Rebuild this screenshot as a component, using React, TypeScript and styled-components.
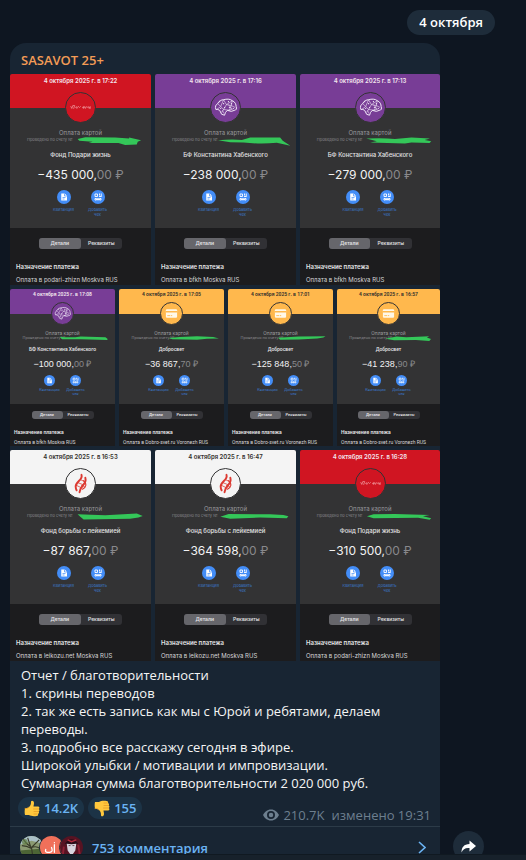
import React from "react";
import styled, { createGlobalStyle, css } from "styled-components";

const GlobalStyle = createGlobalStyle`
  * { box-sizing: border-box; }
  body {
    margin: 0;
    background: #0e1621;
    font-family: "Open Sans", "Noto Sans", sans-serif;
    font-size: 13px;
    color: #f5f5f5;
  }
  button { border: 0; padding: 0; margin: 0; background: none; font: inherit; color: inherit; cursor: pointer; }
  h1, h2, h3, p { margin: 0; font-size: inherit; font-weight: inherit; }
`;

/* ---------- sizes of the two kinds of receipt ---------- */

type Metrics = {
  font: string;
  amountFont: string;
  head: number; headPad: number; date: number; dateLine: number;
  logo: number; logoUp: number;
  text: number; line: number; kindGap: number;
  tiny: number; tinyLine: number;
  nameGap: number;
  amount: number; amountLine: number; amountGap: number;
  icon: number; iconGap: number; action: number; labelGap: number; labelLine: number; bodyPad: number;
  tabs: number; tabsWidth: number; tabsGap: number; tabText: number;
  side: number; titleGap: number; noteGap: number;
  inkTop: number; inkHeight: number;
};

const LARGE: Metrics = {
  font: "Inter",
  amountFont: "Inter",
  head: 34, headPad: 3, date: 6, dateLine: 8,
  logo: 31, logoUp: 16,
  text: 6, line: 8, kindGap: 6,
  tiny: 4, tinyLine: 6,
  nameGap: 8,
  amount: 12, amountLine: 14, amountGap: 9,
  icon: 14, iconGap: 8, action: 34, labelGap: 3, labelLine: 5, bodyPad: 11,
  tabs: 11, tabsWidth: 83, tabsGap: 10, tabText: 5,
  side: 6, titleGap: 14, noteGap: 5,
  inkTop: 28, inkHeight: 11,
};

const SMALL: Metrics = {
  font: "Roboto",
  amountFont: "Liberation Sans",
  head: 25, headPad: 2, date: 5, dateLine: 6,
  logo: 23, logoUp: 12,
  text: 5, line: 6, kindGap: 5,
  tiny: 4, tinyLine: 4,
  nameGap: 6,
  amount: 9, amountLine: 10, amountGap: 7,
  icon: 11, iconGap: 6, action: 26, labelGap: 2, labelLine: 4, bodyPad: 8,
  tabs: 8, tabsWidth: 62, tabsGap: 7, tabText: 4,
  side: 4, titleGap: 10, noteGap: 4,
  inkTop: 21, inkHeight: 8,
};

type M = { $m: Metrics };

/* ---------- page ---------- */

const Page = styled.div`
  height: 100vh;
  display: flex;
  flex-direction: column;
`;

const Chat = styled.main`
  flex: 1;
  min-height: 0;
  overflow: hidden;
  padding: 10px 31px 0 10px;
  display: flex;
  flex-direction: column;
`;

const DatePill = styled.time`
  align-self: flex-end;
  flex: none;
  padding: 0 12px;
  border-radius: 13px;
  background: #1e2c3a;
  font-weight: 600;
  line-height: 25px;
  color: #fff;
`;

const MessageRow = styled.div`
  flex: none;
  margin-top: 8px;
  display: flex;
  align-items: flex-end;
  gap: 13px;
  margin-right: 11px;
`;

const Bubble = styled.article`
  flex: 1;
  min-width: 0;
  border-radius: 16px 16px 0 0;
  background: #182533;
`;

const Author = styled.h2`
  padding: 8px 11px 5px;
  line-height: 18px;
  font-weight: 600;
  color: #f39c56;
`;

const ShareButton = styled.button`
  flex: none;
  width: 31px;
  height: 31px;
  margin-bottom: 6px;
  border-radius: 50%;
  background: #1e2c3a;
  color: #fff;
  display: grid;
  place-items: center;
`;

const Composer = styled.footer`
  flex: none;
  height: 6px;
  background: #17212b;
  border-top: 1px solid #101921;
`;

/* ---------- album ---------- */

const Album = styled.div`
  display: grid;
  gap: 4px;
`;

const AlbumRow = styled.div<{ $columns: string }>`
  display: grid;
  grid-template-columns: ${(p) => p.$columns};
  gap: 4px;
`;

const Card = styled.section<M>`
  min-width: 0;
  overflow: hidden;
  border-radius: 2px 2px 0 0;
  background: #1c1c1e;
  font-family: ${(p) => p.$m.font}, "Liberation Sans", sans-serif;
  color: #e4e4e6;
  white-space: nowrap;
`;

const Head = styled.header<M & { $tint: string; $dark: boolean }>`
  height: ${(p) => p.$m.head}px;
  padding-top: ${(p) => p.$m.headPad}px;
  background: ${(p) => p.$tint};
  color: ${(p) => (p.$dark ? "#33302c" : "#f3e6ee")};
  font-size: ${(p) => p.$m.date}px;
  line-height: ${(p) => p.$m.dateLine}px;
  font-weight: 600;
  text-align: center;
`;

const Body = styled.div<M>`
  position: relative;
  padding-bottom: ${(p) => p.$m.bodyPad}px;
  background: #333334;
  display: flex;
  flex-direction: column;
  align-items: center;
  font-size: ${(p) => p.$m.text}px;
  line-height: ${(p) => p.$m.line}px;
`;

const Logo = styled.div<M & { $tint: string }>`
  width: ${(p) => p.$m.logo}px;
  height: ${(p) => p.$m.logo}px;
  margin-top: -${(p) => p.$m.logoUp}px;
  border: 1px solid #333334;
  border-radius: 50%;
  background: ${(p) => p.$tint};
  svg { display: block; width: 100%; height: 100%; }
`;

const Kind = styled.p<M>`
  margin-top: ${(p) => p.$m.kindGap}px;
  color: #98989c;
`;

const Account = styled.p<M>`
  width: 100%;
  padding-left: 12%;
  font-size: ${(p) => p.$m.tiny}px;
  line-height: ${(p) => p.$m.tinyLine}px;
  color: #88888c;
`;

const Ink = styled.svg<M>`
  position: absolute;
  left: 44%;
  top: ${(p) => p.$m.inkTop}px;
  width: 53%;
  height: ${(p) => p.$m.inkHeight}px;
  fill: #34c759;
`;

const Payee = styled.h3<M>`
  margin-top: ${(p) => p.$m.nameGap}px;
  font-weight: 500;
`;

const Amount = styled.p<M>`
  margin-top: ${(p) => p.$m.amountGap}px;
  font-family: ${(p) => p.$m.amountFont}, Arial, sans-serif;
  font-size: ${(p) => p.$m.amount}px;
  line-height: ${(p) => p.$m.amountLine}px;
  color: #f2f2f3;
  span { color: #89898c; }
`;

const Actions = styled.div<M>`
  margin-top: ${(p) => p.$m.iconGap}px;
  display: flex;
  align-items: flex-start;
`;

const Action = styled.button<M>`
  width: ${(p) => p.$m.action}px;
  display: grid;
  justify-items: center;
  gap: ${(p) => p.$m.labelGap}px;
  font-size: ${(p) => p.$m.tiny}px;
  line-height: ${(p) => p.$m.labelLine}px;
  color: #3b78c9;
  svg { display: block; width: ${(p) => p.$m.icon}px; height: ${(p) => p.$m.icon}px; }
`;

const ActionLabel = styled.span<M>`
  min-height: ${(p) => p.$m.labelLine * 2}px;
`;

const Details = styled.div<M>`
  padding: ${(p) => p.$m.tabsGap}px ${(p) => p.$m.side}px 1px;
  font-size: ${(p) => p.$m.text}px;
  line-height: ${(p) => p.$m.line}px;
`;

const Tabs = styled.div<M>`
  width: ${(p) => p.$m.tabsWidth}px;
  height: ${(p) => p.$m.tabs}px;
  margin: 0 auto;
  border-radius: 3px;
  background: #313135;
  display: grid;
  grid-template-columns: 1fr 1fr;
  font-size: ${(p) => p.$m.tabText}px;
`;

const Tab = styled.button<{ $on?: boolean }>`
  border-radius: 3px;
  line-height: 1;
  font-weight: 500;
  ${(p) => p.$on && css`
    background: #66666b;
    font-weight: 600;
  `}
`;

const PurposeTitle = styled.h3<M>`
  margin-top: ${(p) => p.$m.titleGap}px;
  font-weight: 600;
`;

const Purpose = styled.p<M>`
  margin-top: ${(p) => p.$m.noteGap}px;
  color: #d6d6d8;
`;

/* ---------- caption and footer ---------- */

const Caption = styled.div`
  padding: 5px 11px 0;
  line-height: 18px;
`;

const MetaRow = styled.div`
  padding: 5px 9px 4px 8px;
  display: flex;
  align-items: flex-start;
  gap: 4px;
`;

const Reaction = styled.button`
  height: 22px;
  padding: 0 6px;
  border-radius: 11px;
  background: #1c3346;
  display: flex;
  align-items: center;
  gap: 4px;
  font-weight: 600;
  color: #6ab3f3;
`;

const Meta = styled.div`
  margin: 9px 0 -2px auto;
  display: flex;
  align-items: center;
  gap: 4px;
  line-height: 18px;
  color: #6d7f8f;
  time { margin-left: 3px; }
`;

const Comments = styled.button`
  width: 100%;
  padding: 8px 14px 8px 9px;
  border-top: 1px solid #2c3b48;
  display: flex;
  align-items: center;
  color: #6ab3f3;
  font-weight: 600;
  line-height: 14px;
`;

const Faces = styled.span`
  display: flex;
  margin-right: 10px;
`;

const Face = styled.svg`
  width: 25px;
  height: 25px;
  margin-right: -5px;
  border: 1px solid #182533;
  border-radius: 50%;
`;

const CommentCount = styled.span`
  flex: 1;
  margin-left: 3px;
  text-align: left;
`;

/* ---------- drawings ---------- */

const BrainLogo = () => (
  <svg viewBox="0 0 30 30" fill="none" stroke="#f4ecfa" strokeWidth="1" strokeLinejoin="round" aria-hidden="true">
    <path d="M5 17c-1-3 0-5 2-6 1-3 4-4 6-4 3-1 7-1 9 1 3 1 4 4 4 6 1 2 0 4-2 4l-3 1-4-1-2 2-1 3-3-1-2-4-2-1z" />
    <path d="M7 11l3 3-4 3m4-3 3-7 3 5 6-4-1 5 4 2m-9-3-3 5-3-3m3 3 6 1 2-5-5-1m-3 5-2 3m6-2 5-1-4-5m-6 6 1 3" strokeWidth=".6" />
    <path d="M9 9h.1M13 11h.1M18 9h.1M21 11h.1M10 16h.1M14 15h.1M19 15h.1M23 16h.1" strokeLinecap="round" strokeWidth="1.2" />
  </svg>
);

const ScriptLogo = () => (
  <svg viewBox="0 0 30 30" fill="none" stroke="#f2a3a8" strokeWidth=".7" strokeLinecap="round" aria-hidden="true">
    <path d="M5 14l1 2 1-3h2l-1 3M10 15q1-2 1 0t1 0 1-1l1 1 1-1M17 15l1-1v2l1-2 1 2 1-2 1 1 1-1 1 2 1-2v2" />
  </svg>
);

const FlameLogo = () => (
  <svg viewBox="0 0 30 30" fill="none" stroke="#dc3a32" strokeLinecap="round" aria-hidden="true">
    <path d="M16 6c2 5-6 7-6 12 0 2 0 2 1 4" strokeWidth="2" />
    <path d="M20 9c2 7-5 7-6 15" strokeWidth="2" />
    <path d="M18 12c4 3 3 7-1 9" strokeWidth="1.1" />
    <path d="M15 11l4 2M12 14l5 2M11 17l4 2M16 17l3 1" strokeWidth=".8" />
  </svg>
);

const CardLogo = () => (
  <svg viewBox="0 0 30 30" aria-hidden="true">
    <rect x="7" y="9" width="16" height="12" rx="1.5" fill="#fff8e8" />
    <path d="M7 12.5h16" stroke="#ffb84d" strokeWidth="1.8" />
    <path d="M9 18h4m1 0h2" stroke="#ffb84d" strokeWidth="1.2" />
  </svg>
);

const ReceiptIcon = () => (
  <svg viewBox="0 0 28 28" aria-hidden="true">
    <circle cx="14" cy="14" r="14" fill="#438df7" />
    <path d="M8.500 7h7l4.500 4.500V21h-11.500z" fill="#fff" />
    <path d="M15 7v5h5M11 15h6M11 18h4" stroke="#438df7" strokeWidth="1.400" fill="none" />
  </svg>
);

const QrIcon = () => (
  <svg viewBox="0 0 28 28" aria-hidden="true">
    <circle cx="14" cy="14" r="14" fill="#438df7" />
    <path d="M8 8h5v5H8zM8 17h3v3H8zM13 17h2v3h-2zM17 17h3v3h-3zM16 13h4" fill="none" stroke="#fff" strokeWidth="1.800" />
    <path d="M16 7h1.800v4H16zM19.500 7h1.800v7h-1.800z" fill="#fff" />
  </svg>
);

const Thumb = ({ down }: { down?: boolean }) => (
  <svg width="16" height="17" viewBox="0 0 32 34" aria-hidden="true">
    <g transform={down ? "matrix(1 0 0 -1 0 34)" : undefined}>
      <path d="M2 17l7-2c4-3 5-6 5-12 1-3 6-2 6 3 0 3-1 5-1 7h9c3 0 4 4 1 5 3 1 2 5 0 5 2 2 1 4-1 5 1 2 0 4-3 4-6 1-12 0-15-2H2c-1-4-1-9 0-13z" fill="#ffc83d" />
      <path d="M19 18h9M20 23h8M20 28h6M2 17q5 2 7-2" stroke="#e49a24" strokeWidth="1.500" fill="none" strokeLinecap="round" />
    </g>
  </svg>
);

const Eye = () => (
  <svg width="16" height="12" viewBox="0 0 32 24" aria-hidden="true">
    <path fillRule="evenodd" d="M16 1C8 1 3 6 0 12c3 6 8 11 16 11s13-5 16-11C29 6 24 1 16 1zm0 3a8 8 0 110 16 8 8 0 010-16z" fill="#6d7f8f" />
    <circle cx="16" cy="12" r="4.500" fill="#6d7f8f" />
  </svg>
);

const ShareArrow = () => (
  <svg width="15" height="13" viewBox="0 0 30 26" aria-hidden="true">
    <path d="M17 1l13 11-13 11v-7C9 15 4 18 1 25 1 15 6 8 17 8z" fill="currentColor" />
  </svg>
);

const Chevron = () => (
  <svg width="8" height="13" viewBox="0 0 8 13" fill="none" stroke="currentColor" strokeWidth="1.600" aria-hidden="true">
    <path d="M1 1l6 5.500L1 12" />
  </svg>
);

/* ---------- receipts ---------- */

type Logos = "script" | "brain" | "flame" | "card";
const LOGOS: Record<Logos, { art: React.ReactNode; tint: string; dark: boolean }> = {
  script: { art: <ScriptLogo />, tint: "#d01522", dark: false },
  brain: { art: <BrainLogo />, tint: "#783d96", dark: false },
  flame: { art: <FlameLogo />, tint: "#f4f4f4", dark: true },
  card: { art: <CardLogo />, tint: "#ffb84d", dark: true },
};

type ReceiptData = {
  time: string; logo: Logos; payee: string; whole: string; cents?: string; place: string; ink: string;
};

const PODARI = { logo: "script" as const, payee: "Фонд Подари жизнь", place: "podari-zhizn Moskva RUS" };
const HABENSKY = { logo: "brain" as const, payee: "БФ Константина Хабенского", place: "bfkh Moskva RUS" };
const DOBRO = { logo: "card" as const, payee: "Добросвет", place: "Dobro-svet.ru Voronezh RUS" };
const LEIKO = { logo: "flame" as const, payee: "Фонд борьбы с лейкемией", place: "leikozu.net Moskva RUS" };

const ROWS: { columns: string; metrics: Metrics; items: ReceiptData[] }[] = [
  {
    columns: "141fr 141fr 140fr",
    metrics: LARGE,
    items: [
      { ...PODARI, time: "17:22", whole: "435 000", ink: "M17 9L40 4L130 5L172 8L172 5L208 13L198 18L195 26L160 28L140 22L50 22L62 18L22 15Z" },
      { ...HABENSKY, time: "17:16", whole: "238 000", ink: "M3 13Q40 10 75 12L100 5L190 5L198 15L221 30L180 21Q130 26 80 20L40 19Z" },
      { ...HABENSKY, time: "17:13", whole: "279 000", ink: "M13 8Q60 5 100 9L150 5L206 8L190 12L210 16L205 22L150 20L130 23L25 20L45 16Z" },
    ],
  },
  {
    columns: "105fr 105fr 105fr 103fr",
    metrics: SMALL,
    items: [
      { ...HABENSKY, time: "17:08", whole: "100 000", ink: "M14 7Q60 13 100 6L200 10L208 16L208 21L100 18L25 18Z" },
      { ...DOBRO, time: "17:05", whole: "36 867", cents: "70", ink: "M14 13L60 9L130 5L195 8L218 15L170 16L130 20L30 18Z" },
      { ...DOBRO, time: "17:01", whole: "125 848", cents: "50", ink: "M16 12L100 6L208 5L200 11L175 15L100 19L25 20Z" },
      { ...DOBRO, time: "16:57", whole: "41 238", cents: "90", ink: "M14 16L60 6L100 10L195 5L185 11L202 17L195 26L140 21L50 22Z" },
    ],
  },
  {
    columns: "141fr 141fr 140fr",
    metrics: LARGE,
    items: [
      { ...LEIKO, time: "16:53", whole: "87 867", ink: "M17 7L100 10L195 5L213 12L200 17L175 21L35 23L25 15Z" },
      { ...LEIKO, time: "16:47", whole: "364 598", ink: "M10 15L35 6L160 7L200 9L215 13L210 19L130 17L40 21Z" },
      { ...PODARI, time: "16:28", whole: "310 500", ink: "M15 13L35 7L100 6L205 9L185 13L210 19L205 24L170 18L35 19Z" },
    ],
  },
];

const Receipt = ({ data, metrics: m }: { data: ReceiptData; metrics: Metrics }) => {
  const { art, tint, dark } = LOGOS[data.logo];
  return (
    <Card $m={m}>
      <Head $m={m} $tint={tint} $dark={dark}>4 октября 2025 г. в {data.time}</Head>
      <Body $m={m}>
        <Logo $m={m} $tint={tint}>{art}</Logo>
        <Kind $m={m}>Оплата картой</Kind>
        <Account $m={m}>Проведено по счету №</Account>
        <Ink $m={m} viewBox="0 0 225 34" preserveAspectRatio="none" aria-hidden="true">
          <path d={data.ink} />
        </Ink>
        <Payee $m={m}>{data.payee}</Payee>
        <Amount $m={m}>−{data.whole},<span>{data.cents ?? "00"} ₽</span></Amount>
        <Actions $m={m}>
          <Action $m={m}><ReceiptIcon /><ActionLabel $m={m}>Квитанция</ActionLabel></Action>
          <Action $m={m}><QrIcon /><ActionLabel $m={m}>Добавить<br />чек</ActionLabel></Action>
        </Actions>
      </Body>
      <Details $m={m}>
        <Tabs $m={m}>
          <Tab $on>Детали</Tab>
          <Tab>Реквизиты</Tab>
        </Tabs>
        <PurposeTitle $m={m}>Назначение платежа</PurposeTitle>
        <Purpose $m={m}>Оплата в {data.place}</Purpose>
      </Details>
    </Card>
  );
};

const CAPTION = [
  "Отчет / благотворительности",
  "1. скрины переводов",
  "2. так же есть запись как мы с Юрой и ребятами, делаем переводы.",
  "3. подробно все расскажу сегодня в эфире.",
  "Широкой улыбки / мотивации и импровизации.",
  "Суммарная сумма благотворительности 2 020 000 руб.",
];

const Commenters = () => (
  <Faces>
    <Face viewBox="0 0 24 24" aria-hidden="true">
      <rect width="24" height="24" fill="#8b9a72" />
      <path d="M0 0h24v8L12 5 0 9z" fill="#a9bfc6" />
      <path d="M0 15l24-2v11H0z" fill="#4d6535" />
      <path d="M3 3q4 6 9 9l8-8M12 12l1 7M12 12q5-2 9 1M2 10q5 0 10 3M8 2l3 9" stroke="#383b29" strokeWidth="1.200" fill="none" />
      <circle cx="5" cy="6" r="3" fill="#607c42" opacity=".7" />
    </Face>
    <Face viewBox="0 0 24 24" aria-hidden="true">
      <rect width="24" height="24" fill="#f0705a" />
      <path d="M15 9v8M12 12q2 5-2 5H8q-3 0-2-3M10 20h.1M15 7h.1" stroke="#fff" strokeWidth="1.300" fill="none" strokeLinecap="round" />
    </Face>
    <Face viewBox="0 0 24 24" aria-hidden="true">
      <rect width="24" height="24" fill="#571322" />
      <path d="M5 8q7-9 14 0l-3 1H8z" fill="#2a0d18" />
      <path d="M8 4l4 2 5-2" stroke="#b02a3c" strokeWidth="1.500" fill="none" />
      <path d="M7 8q5 1 10 0l-1 7-4 6-4-6z" fill="#d9d5de" />
      <path d="M9 10h2M13 10h2" stroke="#6b4452" strokeWidth="1" />
      <path d="M19 9l2 13M4 11l-1 9" stroke="#8e2034" strokeWidth="2" />
    </Face>
  </Faces>
);

export default function App() {
  return (
    <>
      <GlobalStyle />
      <Page>
        <Chat>
          <DatePill>4 октября</DatePill>
          <MessageRow>
            <Bubble>
              <Author>SASAVOT 25+</Author>
              <Album>
                {ROWS.map((row, i) => (
                  <AlbumRow key={i} $columns={row.columns}>
                    {row.items.map((item) => (
                      <Receipt key={item.time} data={item} metrics={row.metrics} />
                    ))}
                  </AlbumRow>
                ))}
              </Album>
              <Caption>
                {CAPTION.map((line) => <p key={line}>{line}</p>)}
              </Caption>
              <MetaRow>
                <Reaction><Thumb />14.2K</Reaction>
                <Reaction><Thumb down />155</Reaction>
                <Meta><Eye /><span>210.7K</span><time>изменено 19:31</time></Meta>
              </MetaRow>
              <Comments>
                <Commenters />
                <CommentCount>753 комментария</CommentCount>
                <Chevron />
              </Comments>
            </Bubble>
            <ShareButton aria-label="Поделиться"><ShareArrow /></ShareButton>
          </MessageRow>
        </Chat>
        <Composer />
      </Page>
    </>
  );
}
